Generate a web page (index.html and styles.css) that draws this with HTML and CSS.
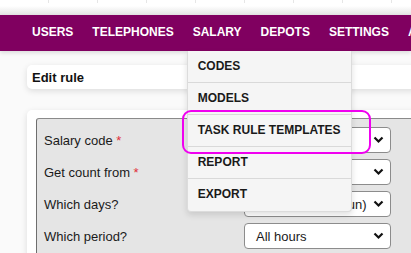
FILE: index.html
```html
<!DOCTYPE html>
<html>
<head>
    <title>Edit rule</title>
    <link rel="stylesheet" href="styles.css">
</head>
<body>
    <div class="topbar">
        <span></span><span></span><span></span><span></span><span></span><span></span><span></span><span></span><span></span>
    </div>

    <nav class="mainnav">
        <a class="nav-item">USERS</a>
        <a class="nav-item">TELEPHONES</a>
        <div class="nav-item has-menu">
            SALARY
            <ul class="dropdown">
                <li>CODES</li>
                <li>MODELS</li>
                <li>TASK RULE TEMPLATES</li>
                <li>REPORT</li>
                <li>EXPORT</li>
            </ul>
        </div>
        <a class="nav-item">DEPOTS</a>
        <a class="nav-item">SETTINGS</a>
        <a class="nav-item">ADMIN</a>
    </nav>

    <div class="page">
        <div class="card title-card">Edit rule</div>

        <div class="card form-card">
            <div class="panel">
                <div class="row">
                    <label>Salary code <span class="req">*</span></label>
                    <div class="select"><span></span>
                        <svg width="11" height="8" viewBox="0 0 11 8"><polyline points="1.5,1.5 5.5,5.5 9.5,1.5" fill="none" stroke="#111" stroke-width="2.2"/></svg>
                    </div>
                </div>
                <div class="row">
                    <label>Get count from <span class="req">*</span></label>
                    <div class="select"><span></span>
                        <svg width="11" height="8" viewBox="0 0 11 8"><polyline points="1.5,1.5 5.5,5.5 9.5,1.5" fill="none" stroke="#111" stroke-width="2.2"/></svg>
                    </div>
                </div>
                <div class="row">
                    <label>Which days?</label>
                    <div class="select"><span>All days (Mon-Sun)</span>
                        <svg width="11" height="8" viewBox="0 0 11 8"><polyline points="1.5,1.5 5.5,5.5 9.5,1.5" fill="none" stroke="#111" stroke-width="2.2"/></svg>
                    </div>
                </div>
                <div class="row">
                    <label>Which period?</label>
                    <div class="select"><span>All hours</span>
                        <svg width="11" height="8" viewBox="0 0 11 8"><polyline points="1.5,1.5 5.5,5.5 9.5,1.5" fill="none" stroke="#111" stroke-width="2.2"/></svg>
                    </div>
                </div>
            </div>
        </div>
    </div>

    <div class="highlight"></div>
</body>
</html>
```
FILE: styles.css
```css
body {
    margin: 0;
    background: #fafafa;
    font-family: "Liberation Sans", Arial, sans-serif;
    color: #111;
    overflow: hidden;
    position: relative;
    height: 253px;
}
.topbar {
    height: 15px;
    display: flex;
    background: linear-gradient(#ffffff 40%, #e4e4e4);
}
.topbar span {
    width: 48px;
    height: 3px;
    border-right: 1px solid #e6e6e6;
    flex-shrink: 0;
}
.mainnav {
    height: 36px;
    background: #800060;
    display: flex;
    padding-left: 22px;
    box-shadow: 0 2px 4px rgba(0, 0, 0, 0.12);
    position: relative;
    z-index: 2;
}
.nav-item {
    display: flex;
    align-items: center;
    padding: 0 9px 2px 10px;
    color: #fff;
    font-size: 12px;
    font-weight: bold;
    white-space: nowrap;
}
.has-menu {
    position: relative;
}
.dropdown {
    position: absolute;
    left: 4px;
    top: 100%;
    width: 163px;
    margin: 0;
    padding: 0;
    list-style: none;
    background: #f5f5f5;
    border: 1px solid #dcdcdc;
    border-top: none;
    border-radius: 0 0 4px 4px;
    box-shadow: 0 3px 6px rgba(0, 0, 0, 0.12);
}
.dropdown li {
    height: 31px;
    line-height: 31px;
    padding-left: 10px;
    border-bottom: 1px solid #d9d9d9;
    color: #1a1a1a;
    font-size: 12px;
    font-weight: bold;
}
.dropdown li:last-child {
    border-bottom: none;
    height: 32px;
}
.page {
    padding: 14px 0 0 27px;
}
.card {
    background: #fff;
    border-radius: 5px;
    box-shadow: 0 2px 6px rgba(0, 0, 0, 0.12);
    width: 420px;
}
.title-card {
    height: 24px;
    line-height: 25px;
    padding-left: 5px;
    font-size: 13px;
    font-weight: bold;
    margin-bottom: 21px;
}
.form-card {
    padding: 8px 0 0 9px;
}
.panel {
    background: #e5e5e5;
    border-top: 1px solid #8a8a8a;
    border-left: 1px solid #6e6e6e;
    border-top-left-radius: 3px;
    padding: 8px 0 10px 7px;
    display: flex;
    flex-direction: column;
    gap: 6px;
}
.row {
    display: flex;
    align-items: center;
    height: 26px;
}
.row label {
    width: 200px;
    font-size: 13px;
    color: #1a1a1a;
}
.req {
    color: #e0303a;
}
.select {
    width: 128px;
    height: 24px;
    background: #fff;
    border: 1px solid #8c8c8c;
    border-radius: 4px;
    display: flex;
    align-items: center;
    justify-content: space-between;
    padding: 0 6px 0 11px;
    font-size: 13px;
    color: #1a1a1a;
}
.select span {
    white-space: nowrap;
}
.highlight {
    position: absolute;
    left: 182px;
    top: 110px;
    width: 185px;
    height: 40px;
    border: 2px solid #f000f0;
    border-radius: 9px;
    z-index: 3;
}
```
